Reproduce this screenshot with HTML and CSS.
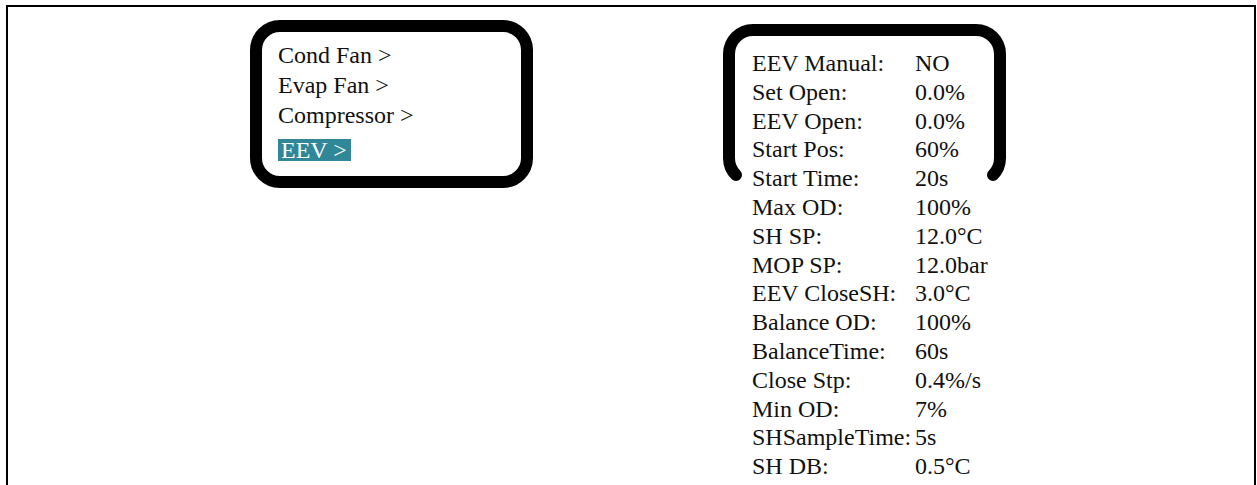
FILE: index.html
```html
<!DOCTYPE html>
<html lang="en">
<head>
  <meta charset="UTF-8">
  <meta name="viewport" content="width=device-width, initial-scale=1.0">
  <title>EEV 参数</title>
  <link rel="stylesheet" href="styles.css">
</head>
<body>
  <div class="frame">
    <!-- 左边的菜单 -->
    <div class="menu">
      <div class="menu-item">Cond Fan &gt;</div>
      <div class="menu-item">Evap Fan &gt;</div>
      <div class="menu-item">Compressor &gt;</div>
      <div class="menu-item active">EEV &gt;</div>
    </div>

    <!-- 右边的参数列表 -->
    <div class="params">
      <svg class="bracket" width="283" height="164" viewBox="0 0 283 164">
        <path d="M 13 151 A 24 24 0 0 1 6 134 V 30 A 24 24 0 0 1 30 6 H 253 A 24 24 0 0 1 277 30 V 134 A 24 24 0 0 1 270 151"
              fill="none" stroke="#000" stroke-width="12" stroke-linecap="round"/>
      </svg>
      <div class="param-list">
        <span>EEV Manual:</span><span>NO</span>
        <span>Set Open:</span><span>0.0%</span>
        <span>EEV Open:</span><span>0.0%</span>
        <span>Start Pos:</span><span>60%</span>
        <span>Start Time:</span><span>20s</span>
        <span>Max OD:</span><span>100%</span>
        <span>SH SP:</span><span>12.0°C</span>
        <span>MOP SP:</span><span>12.0bar</span>
        <span>EEV CloseSH:</span><span>3.0°C</span>
        <span>Balance OD:</span><span>100%</span>
        <span>BalanceTime:</span><span>60s</span>
        <span>Close Stp:</span><span>0.4%/s</span>
        <span>Min OD:</span><span>7%</span>
        <span>SHSampleTime:</span><span>5s</span>
        <span>SH DB:</span><span>0.5°C</span>
      </div>
    </div>
  </div>
</body>
</html>
```

FILE: styles.css
```css
/* 清除默认样式 */
* {
  margin: 0;
  padding: 0;
  box-sizing: border-box;
}

body {
  font-family: "Liberation Serif", "Times New Roman", serif;
  font-size: 24px;
  color: #111;
  background: #fff;
}

/* 外面的大框 */
.frame {
  margin: 5px 0 0 6px;
  width: 1250px;
  height: 480px;
  border: 2px solid #000;
  border-bottom: none;
  padding: 13px 0 0 242px;
  display: flex;
  align-items: flex-start;
  gap: 190px;
}

/* 左边菜单 */
.menu {
  width: 283px;
  height: 168px;
  border: 12px solid #000;
  border-radius: 30px;
  padding: 8px 0 0 16px;
}

.menu-item {
  line-height: 30px;
}

/* 选中的项 */
.menu-item.active {
  width: fit-content;
  margin-top: 9px;
  padding: 0 4px 0 3px;
  line-height: 22px;
  height: 22px;
  background-color: #2f8797;
  color: #fff;
}

/* 右边参数 */
.params {
  position: relative;
  width: 283px;
  margin-top: 4px;
  padding: 25px 0 0 29px;
}

.bracket {
  position: absolute;
  left: 0;
  top: 0;
}

.param-list {
  position: relative;
  display: grid;
  grid-template-columns: 163px auto;
  line-height: 28.8px;
  white-space: nowrap;
}
```
